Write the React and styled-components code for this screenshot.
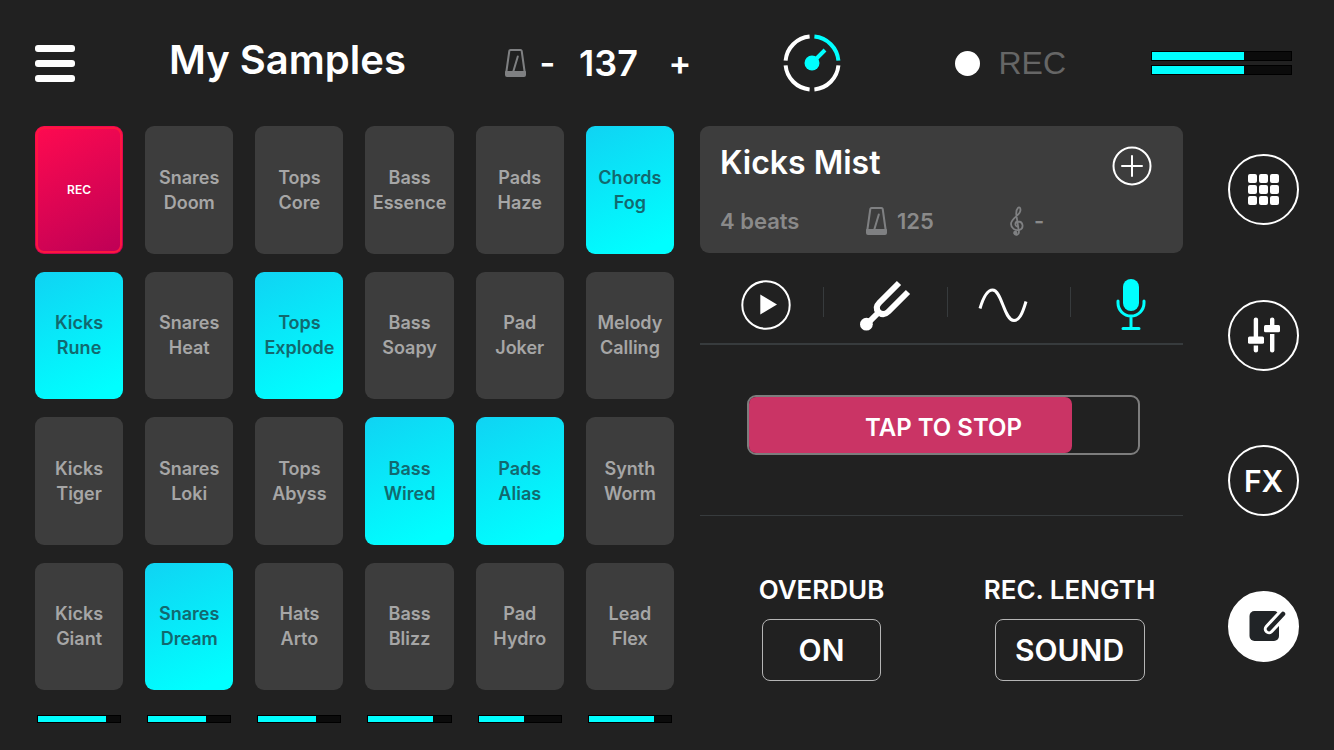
import React, { useState } from 'react';
import styled, { createGlobalStyle, css } from 'styled-components';

const colors = {
    background: '#212121',
    panel: '#3d3d3d',
    cyan: '#00ffff',
    white: '#ffffff',
    muted: '#8a8a8a',
    line: '#373b3d',
    pink: '#ca3465',
};

const GlobalStyle = createGlobalStyle`
    * {
        box-sizing: border-box;
    }
    body {
        margin: 0;
        background: ${colors.background};
        color: ${colors.white};
        font-family: Inter, "Liberation Sans", sans-serif;
    }
    button {
        font-family: inherit;
        color: inherit;
        background: none;
        border: none;
        padding: 0;
        margin: 0;
        cursor: pointer;
    }
    svg {
        display: block;
    }
`;

const Page = styled.div`
    display: flex;
    flex-direction: column;
    min-height: 100vh;
    padding: 0 35px 27px;
`;

const Header = styled.header`
    display: flex;
    align-items: center;
    height: 126px;
`;

const MenuButton = styled.button`
    display: flex;
    flex-direction: column;
    gap: 8px;
    width: 40px;
    span {
        height: 7px;
        border-radius: 3px;
        background: ${colors.white};
    }
`;

const Title = styled.h1`
    flex: 1;
    margin: 0;
    padding: 0 0 6px 94px;
    font-size: 40px;
    line-height: 48px;
    font-weight: 600;
    white-space: nowrap;
`;

const Tempo = styled.div`
    display: flex;
    align-items: center;
    font-size: 36px;
    font-weight: 600;
    line-height: 40px;
    output {
        width: 60px;
        margin: 0 30px 0 20px;
        text-align: center;
    }
    button {
        width: 22px;
        font-size: 34px;
        line-height: 40px;
        font-weight: 600;
        text-align: center;
    }
    svg {
        margin-right: 10px;
    }
`;

const DialButton = styled.button`
    margin: 0 114px 0 93px;
`;

const RecordButton = styled.button`
    display: flex;
    align-items: center;
    gap: 18px;
    color: #666666;
    font-family: "Liberation Sans", Arial, sans-serif;
    font-size: 32px;
    line-height: 40px;
    &::before {
        content: '';
        width: 25px;
        height: 25px;
        border-radius: 50%;
        background: ${colors.white};
    }
`;

const Levels = styled.div`
    display: flex;
    flex-direction: column;
    gap: 4px;
    width: 141px;
    margin: 0 7px 0 85px;
`;

const MeterTrack = styled.div`
    height: ${props => props.$tall ? 10 : 8}px;
    border: 1px solid #000000;
    background: #0b0b0b;
    div {
        height: 100%;
        background: ${colors.cyan};
    }
`;

const Main = styled.main`
    flex: 1;
    display: grid;
    grid-template-columns: minmax(0, 665fr) minmax(0, 528fr) 71px;
    grid-template-rows: 1fr auto;
`;

const Pads = styled.section`
    display: grid;
    grid-template-columns: repeat(6, 1fr);
    grid-auto-rows: 1fr;
    gap: 18px 22px;
    margin-right: 26px;
`;

const Pad = styled.button`
    min-height: 100px;
    border-radius: 9px;
    background: ${colors.panel};
    color: #a6a6a6;
    font-size: 18px;
    line-height: 25px;
    font-weight: 600;
    span {
        display: block;
    }
    ${props => props.$state === 'on' && css`
        background: linear-gradient(155deg, #10d3f3, ${colors.cyan} 90%);
        color: #12696f;
    `}
    ${props => props.$state === 'rec' && css`
        border: 1px solid transparent;
        background: linear-gradient(150deg, #ff0a50, #bd0056) border-box;
        box-shadow: inset 0 0 0 2px #fd1740;
        color: ${colors.white};
        font-size: 12px;
    `}
`;

const PadMeters = styled.div`
    display: grid;
    grid-template-columns: repeat(6, 1fr);
    gap: 26px;
    margin: 25px 28px 0 2px;
`;

const Editor = styled.section`
    display: flex;
    flex-direction: column;
    margin-right: 45px;
`;

const Sample = styled.div`
    height: 127px;
    padding: 16px 31px 12px 20px;
    border-radius: 9px;
    background: ${colors.panel};
`;

const SampleTop = styled.div`
    display: flex;
    justify-content: space-between;
    h2 {
        margin: 0;
        font-size: 32px;
        line-height: 42px;
        font-weight: 600;
    }
    button {
        padding-top: 4px;
    }
`;

const SampleInfo = styled.div`
    display: grid;
    grid-template-columns: 146px 144px 1fr;
    align-items: center;
    margin-top: 15px;
    color: ${colors.muted};
    font-size: 22px;
    line-height: 40px;
    font-weight: 600;
    span {
        display: flex;
        align-items: center;
        gap: 10px;
    }
`;

const Tools = styled.nav`
    height: 92px;
    padding-top: 19px;
    border-bottom: 2px solid ${colors.line};
`;

const ToolRow = styled.div`
    display: grid;
    grid-template-columns: repeat(4, 1fr);
    margin-right: -10px;
`;

const Tool = styled.button`
    display: flex;
    justify-content: center;
    align-items: center;
    height: 65px;
    position: relative;
    & + &::before {
        content: '';
        position: absolute;
        left: 0;
        top: 15px;
        height: 30px;
        width: 1px;
        background: ${colors.line};
    }
`;

const Recorder = styled.div`
    display: flex;
    align-items: flex-start;
    padding: 50px 43px 0 47px;
    height: 171px;
    border-bottom: 1px solid ${colors.line};
`;

const StopButton = styled.button`
    flex: 1;
    position: relative;
    height: 60px;
    padding-top: 6px;
    border: 2px solid #7d7d7d;
    border-radius: 9px;
    font-size: 24px;
    line-height: 28px;
    font-weight: 600;
    span {
        position: relative;
    }
`;

const Progress = styled.i`
    position: absolute;
    top: 0;
    bottom: 0;
    left: 0;
    border-radius: 7px;
    background: ${colors.pink};
`;

const Options = styled.div`
    display: grid;
    grid-template-columns: 243fr 253fr;
    padding-top: 58px;
    margin-right: -13px;
`;

const Option = styled.div`
    display: flex;
    flex-direction: column;
    align-items: center;
    gap: 13px;
    label {
        font-size: 26px;
        line-height: 32px;
        font-weight: 600;
        white-space: nowrap;
    }
    button {
        width: ${props => props.$wide ? 150 : 119}px;
        height: 62px;
        border: 1px solid #b5b5b5;
        border-radius: 8px;
        font-size: 30px;
        line-height: 36px;
        font-weight: 600;
    }
`;

const Rail = styled.nav`
    display: grid;
    grid-auto-rows: 1fr;
    gap: 18px;
    align-items: center;
`;

const RailButton = styled.button`
    width: 71px;
    height: 71px;
    border: 2px solid ${colors.white};
    border-radius: 50%;
    display: flex;
    align-items: center;
    justify-content: center;
    font-size: 30px;
    font-weight: 600;
    background: ${props => props.$active ? colors.white : 'none'};
`;

const Metronome = ({ width, height }) => (
    <svg width={width} height={height} viewBox="0 0 21 28" fill="none" stroke="#7f8082" strokeWidth="2" strokeLinejoin="round">
        <path d="M1.2 24 4.3 2Q4.5 1 5.5 1h10Q16.5 1 16.7 2L19.8 24" />
        <path d="M8.3 22.5 12.8 7.5" strokeLinecap="round" />
        <path d="M1 23h19v3Q20 27 19 27H2Q1 27 1 26Z" fill="#7f8082" />
    </svg>
);

const Dial = () => (
    <svg width="58" height="58" viewBox="0 0 58 58" fill="none" stroke="#fff" strokeWidth="4">
        <path d="M2.6 26.6A26.5 26.5 0 0 1 26.6 2.6M2.6 31.4A26.5 26.5 0 0 0 26.6 55.4M31.4 55.4A26.5 26.5 0 0 0 55.4 31.4" />
        <path d="M31.4 2.6A26.5 26.5 0 0 1 55.4 26.6M29 29 42 16" stroke={colors.cyan} />
        <circle cx="29" cy="29" r="7.5" fill={colors.cyan} stroke="none" />
    </svg>
);

const Clef = () => (
    <svg width="14" height="30" viewBox="0 0 14 30" fill="none" stroke="#7f8082" strokeWidth="1.8" strokeLinecap="round">
        <path d="M7 20.5C4.5 19.5 5 15.5 8 15.5C13.5 15.5 14 22.5 9.5 24C5 25 1 22 1 18C1 12 10.5 9.5 10.5 4C10.5 1.5 9 .8 8 1.9C6 4 6 7 6.5 10L8.9 25.5C9.3 29 5.5 30 4.5 27.5" />
        <circle cx="5.3" cy="26.8" r="1.2" fill="#7f8082" />
    </svg>
);

const PlusCircle = () => (
    <svg width="40" height="40" viewBox="0 0 40 40" fill="none" stroke="#fff" strokeWidth="2" strokeLinecap="round">
        <circle cx="20" cy="20" r="18.5" />
        <path d="M20 10v20M10 20h20" />
    </svg>
);

const Play = () => (
    <svg width="58" height="50" viewBox="-8 0 58 50">
        <circle cx="25" cy="25" r="23.7" fill="none" stroke="#fff" strokeWidth="2" />
        <path d="M19.3 14.5v20L36 24.5Z" fill="#fff" />
    </svg>
);

const Fork = () => (
    <svg width="52" height="52" viewBox="0 0 52 52" fill="none" stroke="#fff" strokeWidth="6">
        <circle cx="7.4" cy="45.2" r="6.4" fill="#fff" stroke="none" />
        <path d="M8 45 20 33M40 4 20.5 23.5Q15.5 28.5 19.5 33Q24.5 37.5 29.5 32.5L49 13" />
    </svg>
);

const Wave = () => (
    <svg width="60" height="38" viewBox="0 0 60 38" fill="none" stroke="#fff" strokeWidth="3">
        <path d="M2 22.5C6 9 10 4 14.5 4C24 4 26 34.500 36 34.500C41 34.500 44 29 48 15.500" />
    </svg>
);

const Mic = () => (
    <svg width="30" height="52" viewBox="0 0 30 52" fill="none" stroke={colors.cyan} strokeWidth="3" strokeLinecap="round">
        <rect x="7" y="0" width="16" height="32" rx="8" fill={colors.cyan} stroke="none" />
        <path d="M2 22v2a13 13 0 0 0 26 0v-2M15 37v12M7 49.5h16" />
    </svg>
);

const GridIcon = () => (
    <svg width="31" height="31" viewBox="0 0 31 31" fill="#fff">
        {[0, 11, 22].map(y => [0, 11, 22].map(x => (
            <rect key={`${x}-${y}`} x={x} y={y} width="9" height="9" rx="2" />
        )))}
    </svg>
);

const Faders = () => (
    <svg width="32" height="36" viewBox="0 0 32 36" fill="#fff">
        <path d="M5.7 20V2.5a2.2 2 0 0 1 4.4 0V20ZM5.7 28.5h4.4v5a2.2 2 0 0 1-4.4 0ZM22 9V2.5a2.2 2 0 0 1 4.4 0V9ZM22 17h4.4v16.5a2.2 2 0 0 1-4.4 0Z" />
        <rect x="0" y="19.5" width="16" height="7.3" rx="1.5" />
        <rect x="16" y="8" width="16" height="7.3" rx="1.5" />
    </svg>
);

const Edit = () => (
    <svg width="44" height="32" viewBox="0 0 44 32" fill="none" strokeLinecap="round">
        <rect x="7.5" y="1" width="29.5" height="30" rx="5" fill="#212427" />
        <path d="M27 19 41 4" stroke="#fff" strokeWidth="10.5" />
        <path d="M27 19 41 4" stroke="#212427" strokeWidth="4.5" />
    </svg>
);

const Meter = ({ level, tall }) => (
    <MeterTrack $tall={tall}>
        <div style={{ width: `${level}%` }} />
    </MeterTrack>
);

const pads = [
    'REC', 'Snares Doom', 'Tops Core', 'Bass Essence', 'Pads Haze', 'Chords Fog',
    'Kicks Rune', 'Snares Heat', 'Tops Explode', 'Bass Soapy', 'Pad Joker', 'Melody Calling',
    'Kicks Tiger', 'Snares Loki', 'Tops Abyss', 'Bass Wired', 'Pads Alias', 'Synth Worm',
    'Kicks Giant', 'Snares Dream', 'Hats Arto', 'Bass Blizz', 'Pad Hydro', 'Lead Flex',
];

const padLevels = [83, 71, 70, 78, 55, 79];

const App = () => {
    const [playing, setPlaying] = useState([5, 6, 8, 15, 16, 19]);
    const [tempo, setTempo] = useState(137);
    const progress = 83;

    const togglePad = index => {
        setPlaying(playing.includes(index) ? playing.filter(i => i !== index) : [...playing, index]);
    }

    const padState = (name, index) => {
        if (name === 'REC') return 'rec';
        return playing.includes(index) ? 'on' : 'off';
    }

    return (
        <Page>
            <GlobalStyle />
            <Header>
                <MenuButton aria-label="Menu"><span /><span /><span /></MenuButton>
                <Title>My Samples</Title>
                <Tempo>
                    <Metronome width="21" height="28" />
                    <button aria-label="Slower" onClick={() => setTempo(tempo - 1)}>-</button>
                    <output>{tempo}</output>
                    <button aria-label="Faster" onClick={() => setTempo(tempo + 1)}>+</button>
                </Tempo>
                <DialButton aria-label="Quantize"><Dial /></DialButton>
                <RecordButton>REC</RecordButton>
                <Levels>
                    <Meter level={66} tall />
                    <Meter level={66} tall />
                </Levels>
            </Header>
            <Main>
                <Pads>
                    {pads.map((name, index) => (
                        <Pad key={name} $state={padState(name, index)} onClick={() => togglePad(index)}>
                            {name.split(' ').map(word => <span key={word}>{word}</span>)}
                        </Pad>
                    ))}
                </Pads>
                <Editor>
                    <Sample>
                        <SampleTop>
                            <h2>Kicks Mist</h2>
                            <button aria-label="Add sample"><PlusCircle /></button>
                        </SampleTop>
                        <SampleInfo>
                            <span>4 beats</span>
                            <span><Metronome width="21" height="28" />125</span>
                            <span><Clef />-</span>
                        </SampleInfo>
                    </Sample>
                    <Tools>
                        <ToolRow>
                            <Tool aria-label="Play"><Play /></Tool>
                            <Tool aria-label="Pitch"><Fork /></Tool>
                            <Tool aria-label="Wave"><Wave /></Tool>
                            <Tool aria-label="Microphone"><Mic /></Tool>
                        </ToolRow>
                    </Tools>
                    <Recorder>
                        <StopButton>
                            <Progress style={{ width: `${progress}%` }} />
                            <span>TAP TO STOP</span>
                        </StopButton>
                    </Recorder>
                    <Options>
                        <Option>
                            <label htmlFor="overdub">OVERDUB</label>
                            <button id="overdub">ON</button>
                        </Option>
                        <Option $wide>
                            <label htmlFor="length">REC. LENGTH</label>
                            <button id="length">SOUND</button>
                        </Option>
                    </Options>
                </Editor>
                <Rail>
                    <RailButton aria-label="Pads"><GridIcon /></RailButton>
                    <RailButton aria-label="Mixer"><Faders /></RailButton>
                    <RailButton>FX</RailButton>
                    <RailButton aria-label="Edit" $active><Edit /></RailButton>
                </Rail>
                <PadMeters>
                    {padLevels.map((level, index) => <Meter key={index} level={level} />)}
                </PadMeters>
            </Main>
        </Page>
    );
}

export default App;
